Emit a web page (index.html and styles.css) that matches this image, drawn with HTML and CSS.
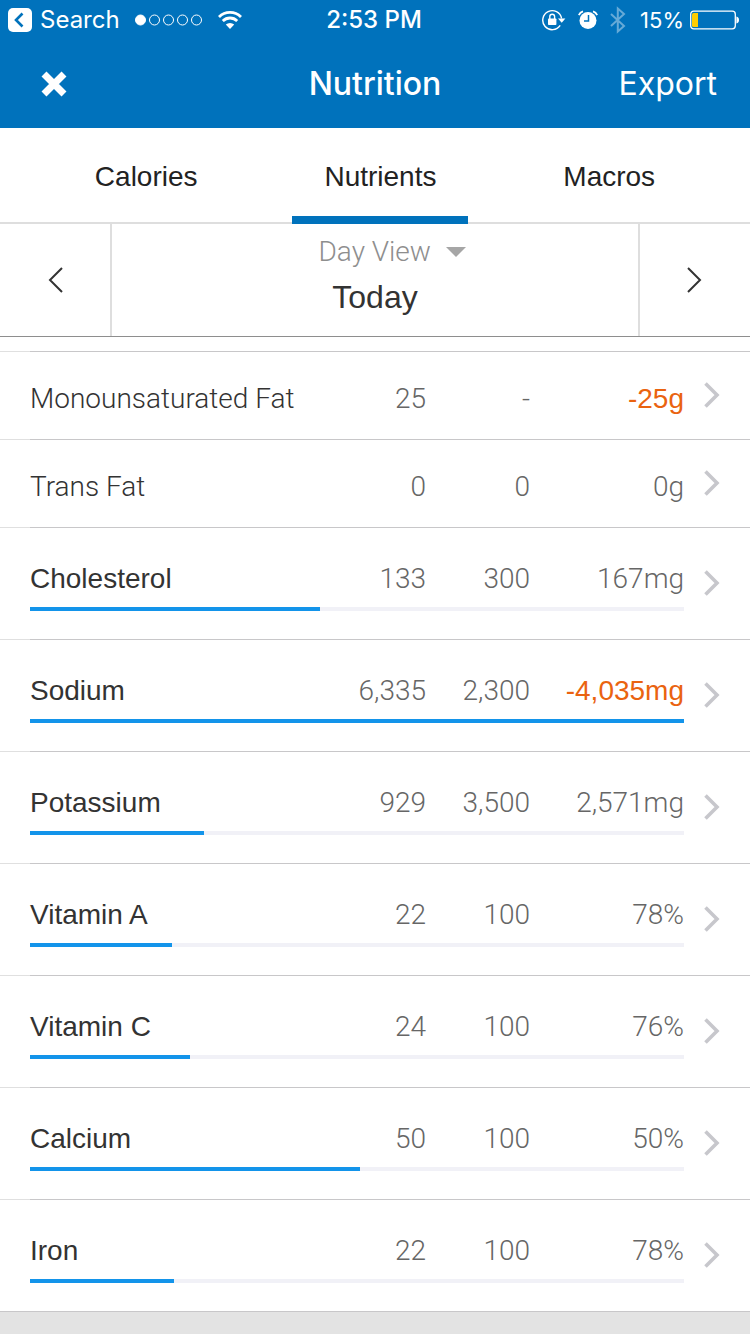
FILE: index.html
```
<!DOCTYPE html>
<html lang="en">
<head>
    <meta charset="UTF-8">
    <meta name="viewport" content="width=device-width, initial-scale=1.0">
    <title>Nutrition</title>
    <link rel="stylesheet" href="styles.css">
</head>
<body>

    <header class="header">
        <div class="status-bar">
            <div class="status-left">
                <a class="back" href="#">
                    <svg width="24" height="24" viewBox="0 0 24 24"><rect width="24" height="24" rx="5" fill="#fff"/><path d="M14.5 5.5 8 12l6.5 6.5" fill="none" stroke="#0072bc" stroke-width="2.6"/></svg>
                    Search
                </a>
                <svg width="68" height="12" viewBox="0 0 68 12" fill="none" stroke="#fff">
                    <circle cx="5.5" cy="6" r="5" fill="#fff"/>
                    <circle cx="19.5" cy="6" r="5"/>
                    <circle cx="33.5" cy="6" r="5"/>
                    <circle cx="47.5" cy="6" r="5"/>
                    <circle cx="61.5" cy="6" r="5"/>
                </svg>
                <svg width="24" height="18" viewBox="0 0 24 18" fill="none" stroke="#fff" stroke-width="2.8">
                    <path d="M1 6a15.6 15.6 0 0 1 22 0"/>
                    <path d="M4.8 10a10.2 10.2 0 0 1 14.4 0"/>
                    <path d="M12 18 7.8 13.6a6 6 0 0 1 8.4 0z" fill="#fff" stroke="none"/>
                </svg>
            </div>
            <span class="time">2:53 PM</span>
            <div class="status-right">
                <svg width="24" height="22" viewBox="0 0 24 22">
                    <path d="M18.2 16.4A9.5 9.5 0 1 1 19.6 9.5" fill="none" stroke="#fff" stroke-width="1.4"/>
                    <path d="M16 9.6h7.4l-3.7 4.2z" fill="#fff"/>
                    <rect x="6" y="9.5" width="8.4" height="6.5" rx=".8" fill="#fff"/>
                    <path d="M7.8 10V7.6a2.4 2.4 0 0 1 4.8 0V10" fill="none" stroke="#fff" stroke-width="1.4"/>
                </svg>
                <svg width="20" height="20" viewBox="0 0 20 20">
                    <circle cx="10" cy="10.5" r="8.5" fill="#fff"/>
                    <path d="M.8 5.2A7 7 0 0 1 5 1.4M19.2 5.2A7 7 0 0 0 15 1.4" fill="none" stroke="#fff" stroke-width="1.8"/>
                    <path d="M10.5 5v6H6" fill="none" stroke="#0072bc" stroke-width="1.5"/>
                </svg>
                <svg width="16" height="28" viewBox="0 0 16 28">
                    <path d="M1 8l13 12-6.2 5.6V2.4L14 8 1 20" fill="none" stroke="#66aad7" stroke-width="2"/>
                </svg>
                <span class="percent">15%</span>
                <svg class="battery" width="50" height="20" viewBox="0 0 50 20">
                    <rect x=".7" y="1.2" width="44.6" height="17.6" rx="3" fill="none" stroke="#fff" stroke-width="1.3"/>
                    <path d="M3.5 3H8v14H3.5A1.5 1.5 0 0 1 2 15.500V4.500A1.500 1.500 0 0 1 3.500 3z" fill="#fc0"/>
                    <path d="M46.400 6.500c3.500.5 3.500 6.500 0 7z" fill="#fff"/>
                </svg>
            </div>
        </div>
        <div class="nav-bar">
            <button class="close" aria-label="Close">
                <svg width="26" height="26" viewBox="0 0 26 26"><path d="M3 3l20 20M23 3 3 23" stroke="#fff" stroke-width="7"/></svg>
            </button>
            <h1>Nutrition</h1>
            <button class="export">Export</button>
        </div>
    </header>

    <nav class="tabs">
        <a class="tab" href="#">Calories</a>
        <a class="tab active" href="#">Nutrients</a>
        <a class="tab" href="#">Macros</a>
    </nav>

    <section class="date-bar">
        <button class="arrow" aria-label="Previous day">
            <svg width="16" height="26" viewBox="0 0 16 26"><path d="M15 1 3 13l12 12" fill="none" stroke="#333" stroke-width="2"/></svg>
        </button>
        <div class="date">
            <div class="view-picker">
                <select aria-label="View">
                    <option>Day View</option>
                </select>
                <svg class="caret" width="20" height="10" viewBox="0 0 20 10"><path d="M0 0h20L10 10z" fill="#a6a6a6"/></svg>
            </div>
            <p class="today">Today</p>
        </div>
        <button class="arrow" aria-label="Next day">
            <svg width="16" height="26" viewBox="0 0 16 26"><path d="M1 1l12 12L1 25" fill="none" stroke="#333" stroke-width="2"/></svg>
        </button>
    </section>

    <!-- bottom edge of the row scrolled under the date bar -->
    <div class="row-end"></div>

    <table class="nutrients">
        <tbody id="rows"></tbody>
    </table>

    <script>
        // name, total, goal, left, bar width in % (null = sub-nutrient without a bar)
        const nutrients = [
            ["Monounsaturated Fat", "25", "-", "-25g", null],
            ["Trans Fat", "0", "0", "0g", null],
            ["Cholesterol", "133", "300", "167mg", 44.3],
            ["Sodium", "6,335", "2,300", "-4,035mg", 100],
            ["Potassium", "929", "3,500", "2,571mg", 26.6],
            ["Vitamin A", "22", "100", "78%", 21.7],
            ["Vitamin C", "24", "100", "76%", 24.5],
            ["Calcium", "50", "100", "50%", 50.5],
            ["Iron", "22", "100", "78%", 22]
        ];

        document.getElementById("rows").innerHTML = nutrients.map(([name, total, goal, left, bar]) => `
            <tr class="row ${bar === null ? "sub" : "main"}">
                <th class="name" scope="row">${name}</th>
                <td>${total}</td>
                <td>${goal}</td>
                <td class="${left.startsWith("-") ? "over" : ""}">${left}</td>
                <td class="more">
                    <a href="#" aria-label="${name} details">
                        <svg width="16" height="26" viewBox="0 0 16 26"><path d="M1.500 1.500 13 13 1.500 24.500" fill="none" stroke="#c7c7cc" stroke-width="3.600"/></svg>
                    </a>
                </td>
                ${bar === null ? "" : `<td class="bar"><div class="fill" style="width: ${bar}%"></div></td>`}
            </tr>`).join("");
    </script>

</body>
</html>
```
FILE: styles.css
```
* {
    box-sizing: border-box;
}

body {
    margin: 0;
    font-family: "Liberation Sans", Arial, sans-serif;
    font-size: 28px;
    line-height: 34px;
    color: #333;
    background-color: #e3e3e3;
}

button {
    padding: 0;
    border: none;
    background: none;
    color: inherit;
    font: inherit;
    cursor: pointer;
}

a {
    color: inherit;
    text-decoration: none;
}

svg {
    display: block;
    flex: none;
}

/* Header */
.header {
    background-color: #0072bc;
    color: white;
    font-family: Inter, sans-serif;
}

.status-bar {
    display: grid;
    grid-template-columns: 1fr auto 1fr;
    align-items: center;
    height: 40px;
    padding: 0 10px 0 8px;
    font-size: 24px;
}

.status-left,
.status-right,
.back {
    display: flex;
    align-items: center;
}

.status-left {
    gap: 15px;
}

.back {
    gap: 8px;
}

.status-right {
    justify-content: flex-end;
    gap: 12px;
}

.time {
    font-weight: 500;
}

.percent {
    margin-left: 2px;
    font-size: 22px;
}

.battery {
    margin-left: -6px;
}

.nav-bar {
    display: grid;
    grid-template-columns: 1fr auto 1fr;
    align-items: center;
    height: 88px;
    padding: 0 33px;
    font-size: 32px;
}

.nav-bar h1 {
    margin: 0;
    font-size: 32px;
    font-weight: 500;
}

.close {
    justify-self: start;
    padding: 0 8px;
}

.export {
    justify-self: end;
}

/* Tabs */
.tabs {
    display: flex;
    justify-content: space-evenly;
    height: 96px;
    background-color: white;
    box-shadow: inset 0 -2px #dedede;
    color: #222;
}

.tab {
    padding: 32px 32px 22px;
    border-bottom: 8px solid transparent;
}

.tab.active {
    border-color: #0072bc;
}

/* Date */
.date-bar {
    display: flex;
    height: 113px;
    background-color: white;
    border-bottom: 1px solid #8e8e8e;
}

.arrow {
    display: flex;
    align-items: center;
    justify-content: center;
    width: 110px;
}

.date {
    flex: 1;
    display: flex;
    flex-direction: column;
    align-items: center;
    gap: 11px;
    padding-top: 11px;
    border: solid #dedede;
    border-width: 0 2px;
}

.view-picker {
    position: relative;
}

.view-picker select {
    display: block;
    padding: 0 34px;
    border: none;
    background: none;
    appearance: none;
    font-family: Roboto, sans-serif;
    font-size: 28px;
    font-weight: 300;
    line-height: 34px;
    color: #8e8e8e;
}

.caret {
    position: absolute;
    top: 12px;
    right: 0;
    pointer-events: none;
}

.today {
    margin: 0;
    font-size: 32px;
}

/* Nutrient list */
.row-end,
.row {
    background: linear-gradient(to right, #e0e0e0 30px, #c8c7c9 30px) bottom / 100% 1px no-repeat white;
}

.row:last-child {
    background-image: linear-gradient(#c8c7c9, #c8c7c9);
}

.row-end {
    height: 15px;
}

.nutrients,
.nutrients tbody {
    display: block;
}

.row {
    display: grid;
    grid-template-columns: 1fr 104px 104px 154px 36px;
    padding: 30px 30px 24px;
    font-family: Roboto, sans-serif;
    font-weight: 300;
    color: #666;
}

.row.main {
    row-gap: 11px;
    padding: 34px 30px 29px;
}

.row th,
.row td {
    padding: 0;
    text-align: right;
}

.row .name {
    text-align: left;
    font-weight: 300;
    color: #333;
    white-space: nowrap;
}

.row.main .name,
.row .over {
    font-family: "Liberation Sans", Arial, sans-serif;
    font-weight: 400;
}

.row .over {
    color: #ea6310;
}

.row .more {
    display: flex;
    align-items: center;
    justify-content: flex-end;
    padding-bottom: 8px;
}

.row.main .more {
    grid-row: 1 / 3;
    grid-column: 5;
}

.row .bar {
    grid-column: 1 / 5;
    grid-row: 2;
    height: 4px;
    background-color: #f1f1f7;
}

.fill {
    height: 4px;
    background-color: #1394ea;
}
```
